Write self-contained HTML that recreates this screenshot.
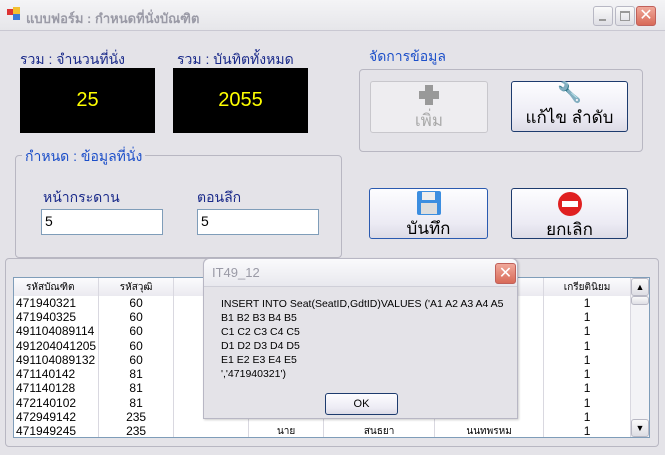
<!DOCTYPE html>
<html><head><meta charset="utf-8"><style>
*{margin:0;padding:0;box-sizing:border-box}
body{width:665px;height:455px;overflow:hidden;background:#e4e3e8;font-family:"Liberation Sans","Noto Sans CJK SC",sans-serif;position:relative}
.a{position:absolute}
.th{font-family:"Liberation Sans","Noto Sans CJK SC",sans-serif}
.title{left:0;top:0;width:665px;height:31px;background:linear-gradient(#f4f4f6,#e6e6ea);border-bottom:1px solid #c9c8d2}
.lab{color:#1a2a8a;font-size:14px}
.blk{background:#000;color:#ffff00;font-size:20px;text-align:center;line-height:65px}
.grp{border:1px solid #b8b7c2;border-radius:4px}
.gl{background:#e4e3e8;color:#1c4fc9;font-size:14px;padding:0 3px}
.btn{border:1px solid #1d3b6e;border-radius:3px;background:linear-gradient(#fdfdff,#ecebf4 70%,#dcdbe6);text-align:center;font-size:17px;color:#000}
.tb{background:#fff;border:1px solid #7f9db9;font-size:14px;padding:3px 3px}
.wb{width:20px;height:20px;border:1px solid #b8b8c4;border-radius:3px;background:linear-gradient(#fafafa,#dedee4)}
table{border-collapse:collapse;font-size:12px}
td{border-right:1px solid #d9d8e0;height:14.3px;padding:0 2px;line-height:13px}
</style></head><body>
<div class="a title"></div>
<div class="a" style="left:7px;top:9px;width:6px;height:6px;background:#d33"></div>
<div class="a" style="left:13px;top:7px;width:7px;height:7px;background:#f3c030"></div>
<div class="a" style="left:13px;top:14px;width:7px;height:6px;background:#3a7ad8"></div>
<div class="a th" style="left:26px;top:8px;font-size:13px;color:#9a9aa6;font-weight:bold">แบบฟอร์ม : กำหนดที่นั่งบัณฑิต</div>
<div class="a wb" style="left:593px;top:6px"><div class="a" style="left:5px;top:12px;width:7px;height:2px;background:#999"></div></div>
<div class="a wb" style="left:615px;top:6px"><div class="a" style="left:4px;top:4px;width:10px;height:10px;border:1px solid #999;border-top-width:2px"></div></div>
<div class="a wb" style="left:636px;top:6px;background:linear-gradient(#f0a89a,#d86a58);border-color:#c0605a;color:#fff;font-size:16px;text-align:center;line-height:18px">✕</div>

<div class="a lab" style="left:20px;top:49px">รวม : จำนวนที่นั่ง</div>
<div class="a lab" style="left:177px;top:49px">รวม : บันทิตทั้งหมด</div>
<div class="a blk" style="left:20px;top:68px;width:135px;height:65px">25</div>
<div class="a blk" style="left:173px;top:68px;width:135px;height:65px">2055</div>

<div class="a grp" style="left:359px;top:69px;width:284px;height:83px"></div>
<div class="a gl" style="left:366px;top:46px">จัดการข้อมูล</div>
<div class="a btn" style="left:370px;top:81px;width:118px;height:52px;border-color:#c8c7cc;background:#eeedf0;color:#aaa"><div style="margin:3px auto 0;width:20px;height:20px;position:relative"><div class="a" style="left:6px;top:0;width:8px;height:20px;background:#999"></div><div class="a" style="left:0;top:6px;width:20px;height:8px;background:#999"></div></div><div style="margin-top:2px">เพิ่ม</div></div>
<div class="a btn" style="left:511px;top:81px;width:117px;height:51px"><div style="color:#2a6ad8;font-size:20px;line-height:22px">🔧</div><div>แก้ไข ลำดับ</div></div>

<div class="a grp" style="left:15px;top:155px;width:327px;height:103px"></div>
<div class="a gl" style="left:22px;top:146px">กำหนด : ข้อมูลที่นั่ง</div>
<div class="a lab" style="left:43px;top:187px;color:#1a2a8a">หน้ากระดาน</div>
<div class="a lab" style="left:197px;top:187px;color:#1a2a8a">ตอนลึก</div>
<div class="a tb" style="left:41px;top:209px;width:122px;height:26px">5</div>
<div class="a tb" style="left:197px;top:209px;width:122px;height:26px">5</div>

<div class="a btn" style="left:369px;top:188px;width:119px;height:51px;border-color:#2a5ab0"><div style="margin:2px auto 0;width:24px;height:24px;background:#3c8ee0;border-radius:2px;position:relative"><div class="a" style="left:5px;top:1px;width:13px;height:8px;background:#eee"></div><div class="a" style="left:4px;top:12px;width:16px;height:11px;background:#ddd"></div></div><div>บันทึก</div></div>
<div class="a btn" style="left:511px;top:188px;width:117px;height:51px"><div style="margin:3px auto 0;width:24px;height:24px;background:#e02020;border-radius:50%;position:relative"><div class="a" style="left:4px;top:9px;width:16px;height:6px;background:#fff"></div></div><div>ยกเลิก</div></div>

<div class="a grp" style="left:5px;top:258px;width:654px;height:189px"></div>
<div class="a" style="left:13px;top:277px;width:637px;height:161px;background:#fff;border:1px solid #7f9db9;overflow:hidden">
<table style="position:absolute;left:0;top:0;width:617px">
<tr style="background:linear-gradient(#fbfbfd,#ebeaf0);height:18px;font-size:10px"><td style="width:84px;padding-left:12px">รหัสบัณฑิต</td><td style="width:75px;text-align:center">รหัสวุฒิ</td><td style="width:75px"></td><td style="width:75px"></td><td style="width:111px"></td><td style="width:109px"></td><td style="text-align:center">เกรียตินิยม</td></tr>
<tr><td>471940321</td><td align=center>60</td><td></td><td></td><td></td><td></td><td align=center>1</td></tr>
<tr><td>471940325</td><td align=center>60</td><td></td><td></td><td></td><td></td><td align=center>1</td></tr>
<tr><td>491104089114</td><td align=center>60</td><td></td><td></td><td></td><td></td><td align=center>1</td></tr>
<tr><td>491204041205</td><td align=center>60</td><td></td><td></td><td></td><td></td><td align=center>1</td></tr>
<tr><td>491104089132</td><td align=center>60</td><td></td><td></td><td></td><td></td><td align=center>1</td></tr>
<tr><td>471140142</td><td align=center>81</td><td></td><td></td><td></td><td></td><td align=center>1</td></tr>
<tr><td>471140128</td><td align=center>81</td><td></td><td></td><td></td><td></td><td align=center>1</td></tr>
<tr><td>472140102</td><td align=center>81</td><td></td><td></td><td></td><td></td><td align=center>1</td></tr>
<tr><td>472949142</td><td align=center>235</td><td></td><td></td><td></td><td></td><td align=center>1</td></tr>
<tr><td>471949245</td><td align=center>235</td><td></td><td align=center style="font-size:10px">นาย</td><td align=center style="font-size:10px">สนธยา</td><td align=center style="font-size:10px">นนทพรหม</td><td align=center>1</td></tr>
</table>
<div class="a" style="left:617px;top:0;width:18px;height:159px;background:#f3f3f6"></div>
<div class="a wb" style="left:617px;top:0;width:18px;height:18px;font-size:9px;text-align:center;line-height:16px">▲</div>
<div class="a wb" style="left:617px;top:18px;width:18px;height:9px"></div>
<div class="a wb" style="left:617px;top:141px;width:18px;height:18px;font-size:9px;text-align:center;line-height:16px">▼</div>
</div>

<div class="a" style="left:203px;top:258px;width:315px;height:161px;background:#e4e3e8;border:1px solid #b8b7c4;border-radius:6px 6px 0 0;box-shadow:1px 1px 2px rgba(0,0,0,.2)">
<div style="height:28px;background:linear-gradient(#fafafc,#e8e8ee);border-bottom:1px solid #cfcfd8;border-radius:6px 6px 0 0;padding:6px 8px;font-size:13px;color:#9a9aa6">IT49_12</div>
<div class="a wb" style="left:291px;top:4px;width:21px;height:21px;background:linear-gradient(#f0a89a,#d86a58);border-color:#c0605a;color:#fff;font-size:16px;text-align:center;line-height:19px">✕</div>
<div class="a" style="left:17px;top:38px;font-size:10.5px;line-height:14px;color:#000;white-space:nowrap">INSERT INTO Seat(SeatID,GdtID)VALUES ('A1 A2 A3 A4 A5<br>B1 B2 B3 B4 B5<br>C1 C2 C3 C4 C5<br>D1 D2 D3 D4 D5<br>E1 E2 E3 E4 E5<br>','471940321')</div>
<div class="a btn" style="left:121px;top:134px;width:73px;height:22px;font-size:11px;line-height:20px">OK</div>
</div>
</body></html>
